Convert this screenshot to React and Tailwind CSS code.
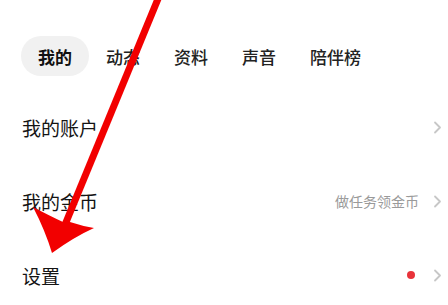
function Chevron() {
  return (
    <svg width="9" height="13" viewBox="0 0 9 13" fill="none" className="shrink-0">
      <path d="M2 1.5 L7 6.5 L2 11.5" stroke="#c7c7c7" strokeWidth="1.8" strokeLinecap="round" strokeLinejoin="round" />
    </svg>
  );
}

function App() {
  const tabs = [
    { id: 'mine', label: '我的', active: true },
    { id: 'feed', label: '动态' },
    { id: 'info', label: '资料' },
    { id: 'voice', label: '声音' },
    { id: 'rank', label: '陪伴榜' },
  ];

  const rows = [
    { id: 'account', label: '我的账户' },
    { id: 'coins', label: '我的金币', hint: '做任务领金币' },
    { id: 'settings', label: '设置', dot: true },
  ];

  return (
    <div
      className="relative w-[448px] h-[305px] overflow-hidden bg-white"
      style={{ fontFamily: '"Noto Sans CJK SC", "Noto Sans", sans-serif' }}
    >
      {/* Tabs */}
      <div className="flex items-center pt-[36px] pl-[21px]">
        {tabs.map((tab) => (
          <div
            key={tab.id}
            className={`h-[40px] px-[17px] flex items-center rounded-full text-[17px] leading-none ${
              tab.active ? 'bg-[#f1f1f1] font-bold text-[#111]' : 'font-medium text-[#222]'
            }`}
          >
            {tab.label}
          </div>
        ))}
      </div>

      {/* List */}
      <div className="mt-[14px] flex flex-col">
        {rows.map((row) => (
          <div key={row.id} className="h-[74px] flex items-center justify-between pl-[22px] pr-[6px]">
            <span className="text-[19px] leading-none text-[#141414]">{row.label}</span>
            <div className="flex items-center gap-[14px]">
              {row.hint && <span className="text-[14px] leading-none text-[#9a9a9a]">{row.hint}</span>}
              {row.dot && <span className="w-[8px] h-[8px] rounded-full bg-[#e8333a] mr-[4px]" />}
              <Chevron />
            </div>
          </div>
        ))}
      </div>

      {/* Red annotation arrow */}
      <svg className="absolute inset-0 pointer-events-none" width="448" height="305" viewBox="0 0 448 305">
        <line x1="160" y1="-6" x2="62" y2="232" stroke="#f20000" strokeWidth="7" />
        <path
          d="M33 207 Q50 216 63 222 L70 222 Q82 226 94 228 Q74 237 52 253 Q45 230 33 207 Z"
          fill="#f20000"
        />
      </svg>
    </div>
  );
}

export default App;
